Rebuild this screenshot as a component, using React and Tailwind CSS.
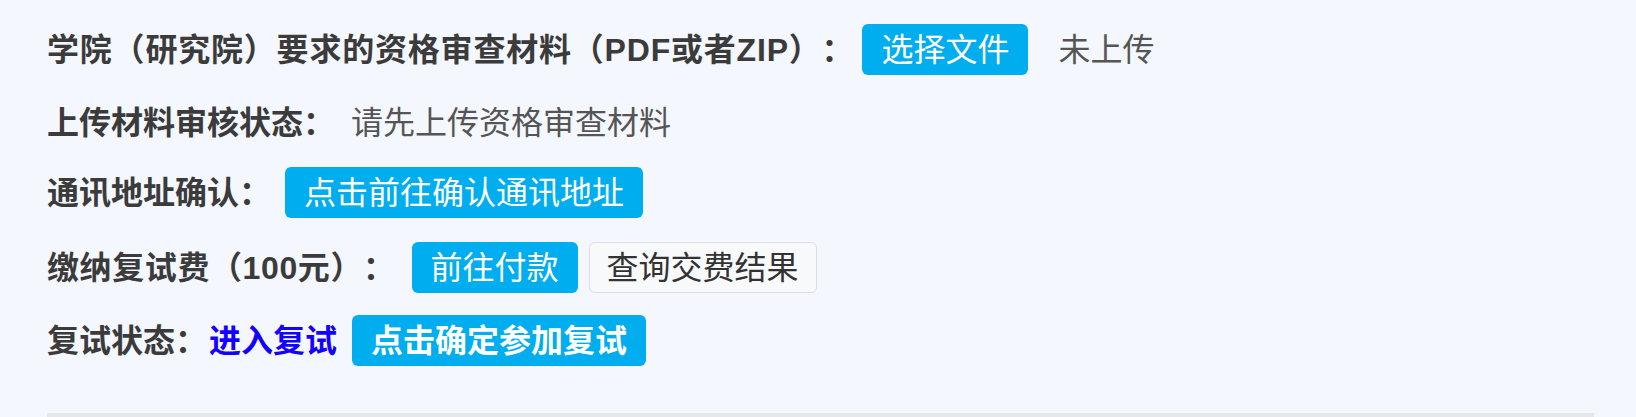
import React from 'react';

const btnBlue =
  'h-[51px] px-[19px] rounded-[6px] bg-[#00adef] text-white leading-none flex items-center';

const App = () => {
  return (
    <div
      className="w-[1636px] h-[417px] overflow-hidden bg-[#f4f7fe] text-[32px] text-[#3b3b3b] [text-spacing-trim:space-all]"
      style={{ fontFamily: '"Liberation Sans", "Noto Sans CJK SC", sans-serif' }}
    >
      <div className="pl-[47px] pr-[42px] pt-[24px]">
        <div className="flex flex-col gap-[24px]">
          {/* upload */}
          <div className="flex items-center h-[51px]">
            <span className="font-bold tracking-[0.8px]">学院（研究院）要求的资格审查材料（PDF或者ZIP）：</span>
            <button className={`${btnBlue} ml-[8px]`}>选择文件</button>
            <span className="ml-[30px] text-[#555]">未上传</span>
          </div>

          {/* review status */}
          <div className="flex items-center h-[44px] pt-[3px]">
            <span className="font-bold">上传材料审核状态：</span>
            <span className="ml-[16px] text-[#555]">请先上传资格审查材料</span>
          </div>

          {/* address */}
          <div className="flex items-center h-[51px]">
            <span className="font-bold">通讯地址确认：</span>
            <button className={`${btnBlue} ml-[14px]`}>点击前往确认通讯地址</button>
          </div>

          {/* fee */}
          <div className="flex items-center h-[51px]">
            <span className="font-bold tracking-[0.6px]">缴纳复试费（100元）：</span>
            <button className={`${btnBlue} ml-[16px]`}>前往付款</button>
            <button className="ml-[11px] h-[51px] px-[17px] rounded-[6px] border border-[#dcdfe6] bg-[#f8f9fb] text-[#333] leading-none flex items-center">
              查询交费结果
            </button>
          </div>

          {/* retest */}
          <div className="flex items-center h-[51px] -mt-[2px]">
            <span className="font-bold">复试状态：</span>
            <span className="ml-[2px] font-bold text-[#1400ff]">进入复试</span>
            <button className={`${btnBlue} ml-[15px] font-bold`}>点击确定参加复试</button>
          </div>
        </div>

        <div className="mt-[47px] h-[4px] bg-[#e6e7ea]" />
      </div>
    </div>
  );
};

export default App;
